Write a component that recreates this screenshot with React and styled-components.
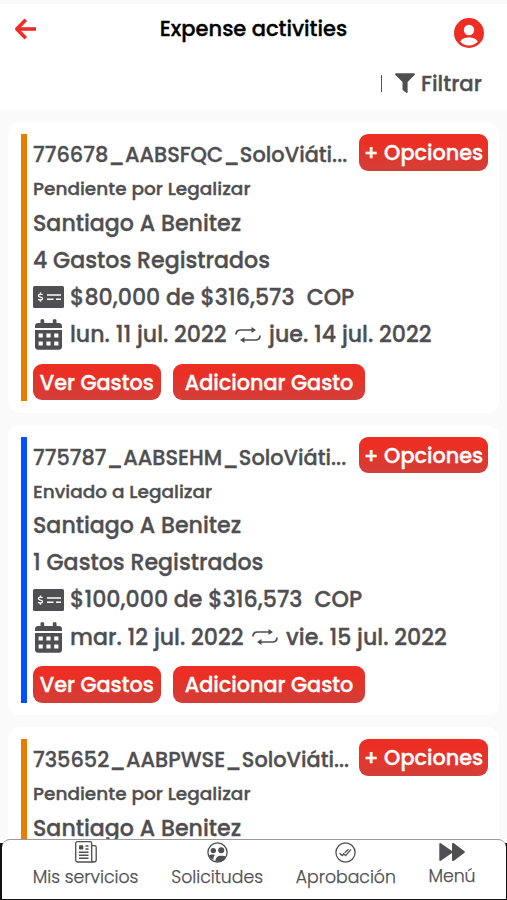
import styled, { createGlobalStyle } from 'styled-components'

const activities = [
  {
    id: 1,
    title: '776678_AABSFQC_SoloViáti...',
    status: 'Pendiente por Legalizar',
    expenses: '4 Gastos Registrados',
    amount: '$80,000 de $316,573',
    from: 'lun. 11 jul. 2022',
    to: 'jue. 14 jul. 2022',
    color: '#ea7d00',
  },
  {
    id: 2,
    title: '775787_AABSEHM_SoloViáti...',
    status: 'Enviado a Legalizar',
    expenses: '1 Gastos Registrados',
    amount: '$100,000 de $316,573',
    from: 'mar. 12 jul. 2022',
    to: 'vie. 15 jul. 2022',
    color: '#0050ff',
  },
  {
    id: 3,
    title: '735652_AABPWSE_SoloViáti...',
    status: 'Pendiente por Legalizar',
    color: '#ea7d00',
  },
]

const BackIcon = () => (
  <svg width="23" height="22" viewBox="0 0 23 22" fill="none" stroke="#ee2d24" strokeWidth="3.600">
    <path d="M22 11H3.500" />
    <path d="M11.800 1.800L2.800 11l9 9.200" strokeLinejoin="round" />
  </svg>
)

const UserIcon = () => (
  <svg width="30" height="30" viewBox="0 0 30 30">
    <circle cx="15" cy="15" r="15" fill="#ee2d24" />
    <circle cx="15" cy="12" r="5.200" fill="#fff" />
    <path d="M6.200 23.800c1.400-3 5-4.200 8.800-4.200s7.400 1.200 8.800 4.200c-2.300 2.400-5.200 3.700-8.800 3.700s-6.500-1.300-8.800-3.700z" fill="#fff" />
  </svg>
)

const FilterIcon = () => (
  <svg width="20" height="20" viewBox="0 0 20 20" fill="#4f4f51">
    <path d="M1 .2h18c.9 0 1.300 1 .6 1.700L12.600 9v10.200c0 .7-.7 1-1.300.6l-3.300-2.500c-.4-.3-.5-.6-.5-1V9L.4 1.900C-.3 1.200.1.200 1 .2z" />
  </svg>
)

const MoneyIcon = () => (
  <svg width="31" height="22" viewBox="0 0 31 22">
    <rect width="31" height="22" rx="1.500" fill="#4f4f51" />
    <g stroke="#fff" fill="none">
      <path d="M9.600 8.800C9 8.100 5.400 7.700 5.400 9.700c0 1.800 4.200.9 4.200 2.800 0 1.900-3.500 1.800-4.400.8M7.500 6.500v1.500M7.500 14v1.700" strokeWidth="1.300" />
      <path d="M14 9h14M14 13.300h6.500M23 13.300h5" strokeWidth="1.400" />
    </g>
  </svg>
)

const CalendarIcon = () => (
  <svg width="27" height="31" viewBox="0 0 27 31" fill="#4f4f51">
    <path d="M5.500 4V1.500C5.500.7 6 .2 6.800.2h1.100c.8 0 1.300.5 1.300 1.300V4h8.600V1.500c0-.8.5-1.300 1.300-1.300h1.100c.8 0 1.300.5 1.300 1.300V4H24c1.700 0 3 1.200 3 2.900V9H0V6.900C0 5.200 1.300 4 3 4z" />
    <path fillRule="evenodd" d="M0 11h27v16.800c0 1.700-1.300 3-3 3H3c-1.700 0-3-1.300-3-3zM3.600 14.500v4h4.200v-4zM11.400 14.500v4h4.200v-4zM19.200 14.500v4h4.200v-4zM3.600 22.500v4h4.200v-4zM11.400 22.500v4h4.200v-4zM19.200 22.500v4h4.200v-4z" />
  </svg>
)

const RepeatIcon = () => (
  <svg width="26" height="18" viewBox="0 0 26 18" fill="none" stroke="#4f4f51" strokeWidth="1.700">
    <path d="M1 8.500C1 5.500 3 4 5.500 4H18M25 9.500c0 3-2 4.500-4.500 4.500H8" />
    <path d="M16.500 1L21 4l-4.500 3zM9.500 11L5 14l4.500 3z" fill="#4f4f51" stroke="none" />
  </svg>
)

const NewsIcon = () => (
  <svg width="22" height="22" viewBox="0 0 22 22" fill="none" stroke="#4f4f51" strokeWidth="1.300">
    <path d="M19 21H2.700C1.500 21 .7 20.200.7 19V2.200C.7 1.300 1.300.7 2.200.7h13c.9 0 1.500.6 1.500 1.500V19c0 1.200.9 2 2.200 2s2.300-.8 2.300-2V6.300c0-1-.6-1.600-1.500-1.600h-3" />
    <path d="M10.500 5h3M10.500 8h3M4 11.200h9.500M4 14.200h9.500M4 17.200h9.500" strokeWidth="1.400" />
    <rect x="4" y="4.200" width="4.300" height="4.300" rx="1" fill="#4f4f51" stroke="none" />
  </svg>
)

const GroupIcon = () => (
  <svg width="21" height="21" viewBox="0 0 21 21">
    <circle cx="10.500" cy="10.500" r="9.600" fill="#fff" stroke="#4f4f51" strokeWidth="1.300" />
    <circle cx="6.300" cy="8.600" r="2.700" fill="#4f4f51" />
    <circle cx="14.200" cy="8.200" r="3" fill="#4f4f51" />
    <path d="M1.600 13.800c1.800-1.400 4.400-1.600 6.300-.8-1 1.200-1.600 2.400-1.500 4.800-2.200-.8-3.800-2-4.800-4zM8.400 19.400c0-3.600 2.200-5.600 5.800-5.600 2 0 3.600.3 5.200 1.100-1.900 3.700-6 5.500-11 4.500z" fill="#4f4f51" />
  </svg>
)

const ApproveIcon = () => (
  <svg width="21" height="21" viewBox="0 0 21 21" fill="none" stroke="#4f4f51">
    <circle cx="10.500" cy="10.500" r="9.600" strokeWidth="1.300" />
    <path d="M4.500 11.300l2.700 2.300 1.300-1.200M8.200 11.200l2.500 2.400 5.300-6.200M9.700 10.800l3.800-3.500" strokeWidth="1.300" />
  </svg>
)

const ForwardIcon = () => (
  <svg width="26" height="20" viewBox="0 0 26 20" fill="#4f4f51">
    <path d="M1.800 1.200L13 9V2.200c0-1.100 1-1.600 1.900-1L25.200 9c.8.600.8 1.400 0 2l-10.300 7.800c-.9.600-1.900.1-1.900-1V11L1.800 18.800C1 19.400.3 19 .3 18V2c0-1 .7-1.400 1.500-.8z" />
  </svg>
)

const navItems = [
  { label: 'Mis servicios', Icon: NewsIcon, width: 107 },
  { label: 'Solicitudes', Icon: GroupIcon, width: 93 },
  { label: 'Aprobación', Icon: ApproveIcon, width: 101 },
  { label: 'Menú', Icon: ForwardIcon, width: 48, lift: 1 },
]

function Activity({ title, status, expenses, amount, from, to, color }) {
  return (
    <Card>
      <Stripe $color={color} />
      <Body>
        <CardHead>
          <CardTitle>{title}</CardTitle>
          <Button $width={129}>+ Opciones</Button>
        </CardHead>
        <Status>{status}</Status>
        <Line $height={34}>Santiago A Benitez</Line>
        {expenses && (
          <>
            <Line $height={40}>{expenses}</Line>
            <Line $height={34}>
              <IconSlot><MoneyIcon /></IconSlot>
              {amount}
              <Currency>COP</Currency>
            </Line>
            <Line $height={41}>
              <IconSlot><CalendarIcon /></IconSlot>
              {from}
              <Between><RepeatIcon /></Between>
              {to}
            </Line>
            <Actions>
              <Button $width={127.5}>Ver Gastos</Button>
              <Button $width={192}>Adicionar Gasto</Button>
            </Actions>
          </>
        )}
      </Body>
    </Card>
  )
}

function App() {
  return (
    <Screen>
      <GlobalStyle />
      <Header>
        <TopBar>
          <Back><BackIcon /></Back>
          <PageTitle>Expense activities</PageTitle>
          <Profile><UserIcon /></Profile>
        </TopBar>
        <Filter>
          <Divider />
          <FilterIcon />
          <FilterText>Filtrar</FilterText>
        </Filter>
      </Header>
      <List>
        {activities.map((item) => <Activity key={item.id} {...item} />)}
      </List>
      <NavFrame>
        <Nav>
          {navItems.map(({ label, Icon, width, lift }) => (
            <NavItem key={label} $width={width}>
              <NavIcon><Icon /></NavIcon>
              <NavLabel $lift={lift}>{label}</NavLabel>
            </NavItem>
          ))}
        </Nav>
      </NavFrame>
    </Screen>
  )
}

const GlobalStyle = createGlobalStyle`
  * {
    box-sizing: border-box;
  }
  body {
    margin: 0;
    font-family: Poppins, Inter, "Liberation Sans", sans-serif;
    color: #4f4f51;
    -webkit-text-stroke: 0.35px currentColor;
  }
  svg {
    display: block;
    flex-shrink: 0;
  }
`

const Screen = styled.div`
  display: flex;
  flex-direction: column;
  height: 900px;
  overflow: hidden;
  background-color: #fafafa;
`

const Header = styled.header`
  flex: none;
  height: 106px;
  margin-top: 4px;
  background-color: #fff;
`

const TopBar = styled.div`
  display: grid;
  grid-template-columns: 60px 1fr 60px;
  height: 50px;
`

const Back = styled.div`
  padding: 14px 0 0 14px;
`

const PageTitle = styled.h1`
  margin: 0;
  font-size: 21px;
  font-weight: 500;
  line-height: 49px;
  text-align: center;
  white-space: nowrap;
  color: #000;
`

const Profile = styled.div`
  padding: 14px 0 0 7px;
`

const Filter = styled.div`
  display: flex;
  justify-content: flex-end;
  align-items: center;
  height: 58px;
  padding-right: 25px;
`

const Divider = styled.div`
  width: 1px;
  height: 17px;
  margin-right: 13px;
  background-color: #555;
`

const FilterText = styled.span`
  margin-left: 6px;
  width: 61px;
  font-size: 21.3px;
  font-weight: 500;
  white-space: nowrap;
`

const List = styled.main`
  display: flex;
  flex: 1;
  flex-direction: column;
  gap: 12px;
  min-height: 0;
  padding: 12px 8px 0;
  overflow: hidden;
`

const Card = styled.section`
  display: flex;
  flex: none;
  gap: 6px;
  height: 290.5px;
  padding: 12px 11px 12px 13px;
  border-radius: 12px;
  background-color: #fff;
`

const Stripe = styled.div`
  width: 6px;
  background-color: ${({ $color }) => $color};
`

const Body = styled.div`
  flex: 1;
  min-width: 0;
`

const CardHead = styled.div`
  display: flex;
  justify-content: space-between;
  height: 37px;
`

const CardTitle = styled.h2`
  margin: 0;
  font-size: 20.9px;
  font-weight: 500;
  line-height: 41px;
  white-space: nowrap;
`

const Status = styled.div`
  font-size: 18.5px;
  font-weight: 500;
  line-height: 35px;
`

const Line = styled.div`
  display: flex;
  align-items: center;
  height: ${({ $height }) => $height}px;
  font-size: 22.15px;
  font-weight: 500;
  white-space: nowrap;
`

const IconSlot = styled.span`
  display: flex;
  justify-content: center;
  width: 31px;
  margin-right: 6px;
`

const Currency = styled.span`
  margin-left: 12px;
`

const Between = styled.span`
  margin: 0 8.5px 0 8px;
`

const Actions = styled.div`
  display: flex;
  gap: 12.5px;
  margin-top: 8.5px;
`

const Button = styled.button`
  flex: none;
  width: ${({ $width }) => $width}px;
  height: 36.5px;
  padding: 1px 0 0;
  border: 0;
  border-radius: 9px;
  background: linear-gradient(#ec2f24 25%, #d23f39);
  color: #fff;
  font-family: inherit;
  font-size: 20.8px;
  font-weight: 500;
  white-space: nowrap;
`

const NavFrame = styled.div`
  flex: none;
  height: 61px;
  padding: 0 1px 1px 2px;
  background: linear-gradient(#fff 4px, #111 4px);
`

const Nav = styled.nav`
  display: flex;
  justify-content: space-between;
  height: 60px;
  padding: 1px 30px 0 30px;
  border-top: 1px solid #999;
  border-radius: 8px 8px 0 0;
  background-color: #fff;
`

const NavItem = styled.div`
  display: flex;
  flex-direction: column;
  align-items: center;
  width: ${({ $width }) => $width}px;
`

const NavIcon = styled.span`
  display: flex;
  align-items: center;
  height: 22px;
`

const NavLabel = styled.span`
  margin-top: ${({ $lift = 0 }) => 3 - $lift}px;
  font-size: 17.3px;
  font-weight: 300;
  line-height: 22px;
  white-space: nowrap;
  -webkit-text-stroke-width: 0.25px;
`

export default App
